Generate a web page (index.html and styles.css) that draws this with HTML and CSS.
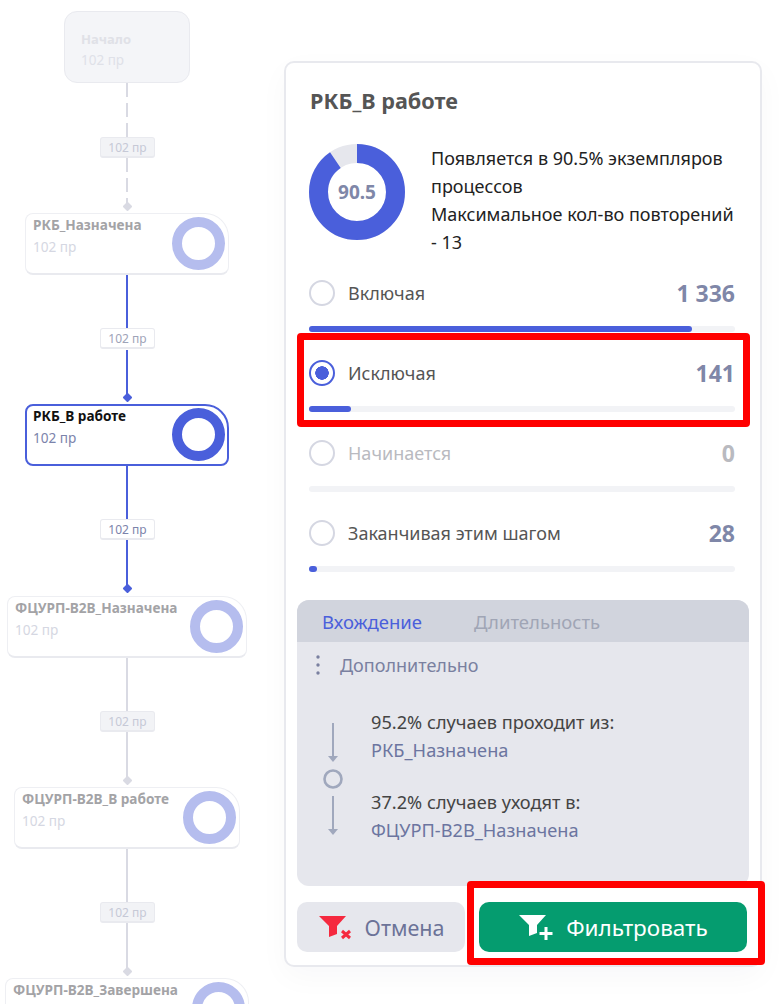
FILE: index.html
```html
<!DOCTYPE html>
<html lang="ru">
<head>
<meta charset="utf-8">
<title>РКБ_В работе</title>
<link rel="stylesheet" href="styles.css">
</head>
<body>
<div class="page">
  <div class="graph">
    <div class="edge dashed e1"></div>
    <div class="edge dashed e2"></div>
    <div class="edge blue e3"></div>
    <div class="edge blue e4"></div>
    <div class="edge blue e5"></div>
    <div class="edge blue e6"></div>
    <div class="edge e7"></div>
    <div class="edge e8"></div>
    <div class="edge e9"></div>
    <div class="edge e10"></div>

    <div class="diamond d1"></div>
    <div class="diamond blue d2"></div>
    <div class="diamond blue d3"></div>
    <div class="diamond d4"></div>
    <div class="diamond d5"></div>

    <div class="tag dim t1">102 пр</div>
    <div class="tag t2">102 пр</div>
    <div class="tag active t3">102 пр</div>
    <div class="tag dim t4">102 пр</div>
    <div class="tag dim t5">102 пр</div>

    <div class="start"><div class="start-name">Начало</div><div class="start-count">102 пр</div></div>

    <div class="node n1"><div><div class="name">РКБ_Назначена</div><div class="count">102 пр</div></div><div class="ring"></div></div>
    <div class="node current n2"><div><div class="name">РКБ_В работе</div><div class="count">102 пр</div></div><div class="ring"></div></div>
    <div class="node n3"><div><div class="name">ФЦУРП-B2B_Назначена</div><div class="count">102 пр</div></div><div class="ring"></div></div>
    <div class="node n4"><div><div class="name">ФЦУРП-B2B_В работе</div><div class="count">102 пр</div></div><div class="ring"></div></div>
    <div class="node n5"><div><div class="name">ФЦУРП-B2B_Завершена</div></div><div class="ring"></div></div>
  </div>

  <div class="panel">
    <h1 class="title">РКБ_В работе</h1>
    <div class="summary">
      <div class="donut">
        <svg width="96" height="96" viewBox="0 0 96 96">
          <circle cx="48" cy="48" r="38.5" fill="none" stroke="#e6e7ed" stroke-width="19"/>
          <circle cx="48" cy="48" r="38.5" fill="none" stroke="#4a5fdb" stroke-width="19" pathLength="100" stroke-dasharray="90.5 100" transform="rotate(-90 48 48)"/>
        </svg>
        <span class="donut-value">90.5</span>
      </div>
      <p class="summary-text">Появляется в 90.5% экземпляров процессов<br>Максимальное кол-во повторений - 13</p>
    </div>

    <div class="options">
      <div class="option">
        <div class="option-head"><span class="radio"></span><span class="option-label">Включая</span><span class="option-value">1 336</span></div>
        <div class="bar"><div class="fill f1"></div></div>
      </div>
      <div class="option">
        <div class="option-head"><span class="radio checked"></span><span class="option-label">Исключая</span><span class="option-value">141</span></div>
        <div class="bar"><div class="fill f2"></div></div>
      </div>
      <div class="option disabled">
        <div class="option-head"><span class="radio"></span><span class="option-label">Начинается</span><span class="option-value">0</span></div>
        <div class="bar"></div>
      </div>
      <div class="option">
        <div class="option-head"><span class="radio"></span><span class="option-label">Заканчивая этим шагом</span><span class="option-value">28</span></div>
        <div class="bar"><div class="fill f4"></div></div>
      </div>
    </div>

    <div class="details">
      <div class="tabs"><span class="tab on">Вхождение</span><span class="tab">Длительность</span></div>
      <div class="more">
        <svg class="dots" width="4" height="20" viewBox="0 0 4 20"><circle cx="2" cy="2" r="1.7"/><circle cx="2" cy="10" r="1.7"/><circle cx="2" cy="18" r="1.7"/></svg>
        <span>Дополнительно</span>
      </div>
      <div class="flow">
        <svg class="flow-icon" width="22" height="114" viewBox="0 0 22 114">
          <path d="M11 0V34" stroke="#a0a8bd" stroke-width="2" fill="none"/>
          <path d="M6 33H16L11 39Z" fill="#a0a8bd"/>
          <circle cx="11" cy="56" r="8.5" fill="none" stroke="#a0a8bd" stroke-width="2.6"/>
          <path d="M11 73V107" stroke="#a0a8bd" stroke-width="2" fill="none"/>
          <path d="M6 106H16L11 112Z" fill="#a0a8bd"/>
        </svg>
        <div class="flow-text">
          <div class="flow-line">95.2% случаев проходит из:</div>
          <div class="flow-link">РКБ_Назначена</div>
          <div class="flow-line gap">37.2% случаев уходят в:</div>
          <div class="flow-link">ФЦУРП-B2B_Назначена</div>
        </div>
      </div>
    </div>

    <div class="actions">
      <button class="btn cancel" type="button">
        <svg width="34" height="26" viewBox="0 0 34 26"><path d="M1 2H28L19 12V20L11 23V12Z" fill="#f5293f"/><path d="M24 17L32 24M32 17L24 24" stroke="#f5293f" stroke-width="3" fill="none"/></svg>
        <span>Отмена</span>
      </button>
      <button class="btn apply" type="button">
        <svg width="35" height="28" viewBox="0 0 35 28"><path d="M1 2H28L19 12V20L11 23V12Z" fill="#fff"/><path d="M28 14V27M21.5 20.5H34.5" stroke="#fff" stroke-width="3" fill="none"/></svg>
        <span>Фильтровать</span>
      </button>
    </div>

    <div class="mark mark-option"></div>
    <div class="mark mark-apply"></div>
  </div>
</div>
</body>
</html>
```
FILE: styles.css
```css
* { box-sizing: border-box; }
html, body { margin: 0; padding: 0; height: 100%; overflow: hidden; background: #fff; }
body { font-family: "Noto Sans", "Open Sans", sans-serif; color: #222; }
.page { display: flex; width: 784px; height: 1004px; overflow: hidden; }

/* process graph: free canvas */
.graph { position: relative; flex: 0 0 284px; height: 1004px; }
.edge { position: absolute; left: 126px; width: 2px; background: #d9dae3; }
.edge.blue { background: #4a5fdb; }
.edge.dashed { background: repeating-linear-gradient(to bottom, #d9dae3 0 14px, transparent 14px 20px); }
.e1 { top: 83px; height: 54px; }
.e2 { top: 158px; height: 48px; }
.e3 { top: 275px; height: 54px; }
.e4 { top: 350px; height: 47px; }
.e5 { top: 466px; height: 53px; }
.e6 { top: 540px; height: 49px; }
.e7 { top: 658px; height: 53px; }
.e8 { top: 732px; height: 48px; }
.e9 { top: 849px; height: 53px; }
.e10 { top: 923px; height: 48px; }

.diamond { position: absolute; left: 123.5px; width: 7px; height: 7px; background: #d9dae3; transform: rotate(45deg); border-radius: 1px; }
.diamond.blue { background: #4a5fdb; }
.d1 { top: 202.5px; }
.d2 { top: 393.5px; }
.d3 { top: 585px; }
.d4 { top: 776.5px; }
.d5 { top: 967.5px; }

.tag { position: absolute; left: 100px; width: 55px; height: 21px; display: flex; align-items: center; justify-content: center; font-size: 12px; background: #fff; border: 1px solid #e9eaef; border-bottom-width: 2px; border-radius: 3px; color: #9ea3b8; }
.tag.active { color: #7b83ab; }
.tag.dim { background: #f2f3f6; color: #c6c9d6; }
.t1 { top: 137px; }
.t2 { top: 328px; }
.t3 { top: 519px; }
.t4 { top: 711px; }
.t5 { top: 902px; }

.start { position: absolute; left: 64px; top: 11px; width: 126px; height: 72px; padding: 17px 16px; background: #f4f5f8; border: 1px solid #e9eaef; border-radius: 13px; }
.start-name { font-size: 13px; font-weight: 700; line-height: 20px; color: #e0e1e7; }
.start-count { font-size: 13.5px; line-height: 22px; color: #dfe1e8; }

.node { position: absolute; display: flex; justify-content: space-between; height: 62px; padding: 1px 3px 0 7px; background: #fff; border: 1px solid #eeeff3; border-bottom: 2px solid #e9eaef; border-radius: 8px 24px 8px 8px; }
.name { font-size: 13.6px; font-weight: 700; line-height: 20px; color: #a3a3a6; white-space: nowrap; }
.count { margin-top: 1px; font-size: 13.6px; line-height: 22px; color: #d5d7e2; }
.ring { flex: none; width: 53px; height: 53px; margin-top: 2px; border: 10.5px solid #b5bdee; border-radius: 50%; }
.n1 { left: 25px; top: 213px; width: 204px; }
.n2 { left: 25px; top: 404px; width: 204px; }
.n3 { left: 7px; top: 596px; width: 240px; }
.n4 { left: 14px; top: 787px; width: 226px; }
.n5 { left: 5px; top: 978px; width: 244px; }
.node.current { border: 2px solid #4a5fdb; padding: 0 2px 0 6px; }
.current .name { color: #111; }
.current .count { color: #7b83ab; }
.current .ring { border-color: #4a5fdb; }

/* side panel */
.panel { position: relative; flex: none; width: 478px; height: 906px; margin-top: 61px; padding: 25px 11px 13px; background: #fff; border: 2px solid #e8e9ee; border-radius: 10px; box-shadow: 0 10px 30px rgba(20, 24, 60, .03); }
.title { margin: 0 0 30px 13px; font-size: 21.6px; font-weight: 700; line-height: 26px; color: #555; }
.summary { display: flex; gap: 26px; padding-left: 12px; }
.donut { position: relative; flex: none; width: 96px; height: 96px; }
.donut svg { display: block; }
.donut-value { position: absolute; inset: 0; display: flex; align-items: center; justify-content: center; font-size: 19px; font-weight: 700; color: #7f87a8; }
.summary-text { width: 306px; margin: 0; font-size: 18px; line-height: 28px; color: #222; }

.options { display: flex; flex-direction: column; gap: 28px; margin-top: 24px; padding: 0 14px 0 12px; }
.option-head { display: flex; align-items: center; height: 26px; }
.radio { flex: none; width: 26px; height: 26px; margin-right: 13px; border: 2px solid #d5d7e2; border-radius: 50%; background: #fff; }
.radio.checked { border-color: #4a5fdb; background: radial-gradient(circle, #4a5fdb 0 6.5px, transparent 7px); }
.option-label { flex: 1; font-size: 18px; color: #555; }
.option-value { font-size: 23px; font-weight: 700; color: #7f87a8; }
.disabled .option-label, .disabled .option-value { color: #b9bac0; }
.bar { height: 6px; margin-top: 20px; background: #f2f3f6; border-radius: 3px; }
.fill { height: 6px; background: #4a5fdb; border-radius: 3px; }
.f1 { width: 90%; }
.f2 { width: 9.9%; }
.f4 { width: 1.9%; }

.details { height: 286px; margin-top: 28px; background: #e6e7ed; border-radius: 12px; }
.tabs { display: flex; gap: 52px; align-items: center; height: 42px; padding-left: 25px; background: #d1d4dd; border-radius: 12px 12px 0 0; }
.tab { font-size: 18.5px; color: #a0a5b5; }
.tab.on { color: #4a5fdb; }
.more { display: flex; align-items: center; gap: 20px; height: 24px; margin-top: 11px; padding-left: 19px; font-size: 18px; color: #7a80a0; }
.dots { fill: #7a80a0; }
.flow { display: flex; gap: 27px; margin-top: 31px; padding-left: 25px; }
.flow-icon { flex: none; margin-top: 15px; }
.flow-text { font-size: 18.2px; line-height: 28px; }
.flow-line { color: #444; }
.flow-line.gap { margin-top: 24px; }
.flow-link { color: #6c75a0; }

.actions { display: flex; gap: 14px; margin-top: 16px; }
.btn { display: flex; align-items: center; justify-content: center; gap: 13px; height: 50px; border: 0; border-radius: 10px; font-family: inherit; font-size: 21.5px; }
.btn svg { flex: none; }
.cancel { width: 168px; background: #e6e7ed; color: #6c7398; }
.apply { width: 268px; background: #059c6f; color: #fff; font-size: 22.5px; }

.mark { position: absolute; border: 7px solid #f00; border-radius: 4px; pointer-events: none; }
.mark-option { left: 11px; top: 270px; width: 453px; height: 94px; }
.mark-apply { left: 181px; top: 818px; width: 298px; height: 84px; }
```
